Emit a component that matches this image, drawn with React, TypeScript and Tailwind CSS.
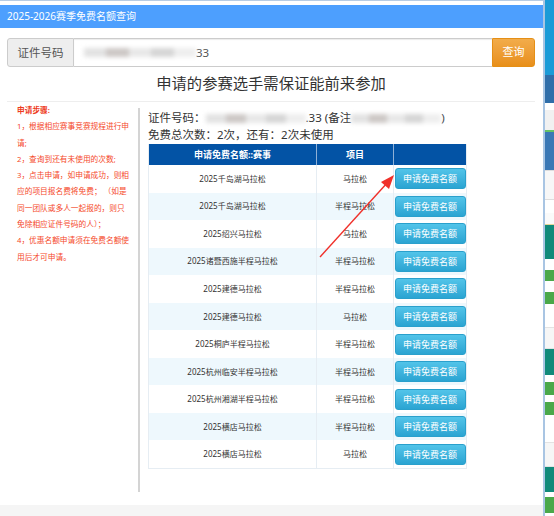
import React from "react";

const rows: [string, string][] = [
  ["2025千岛湖马拉松", "马拉松"],
  ["2025千岛湖马拉松", "半程马拉松"],
  ["2025绍兴马拉松", "马拉松"],
  ["2025诸暨西施半程马拉松", "半程马拉松"],
  ["2025建德马拉松", "半程马拉松"],
  ["2025建德马拉松", "马拉松"],
  ["2025桐庐半程马拉松", "半程马拉松"],
  ["2025杭州临安半程马拉松", "半程马拉松"],
  ["2025杭州湘湖半程马拉松", "半程马拉松"],
  ["2025横店马拉松", "半程马拉松"],
  ["2025横店马拉松", "马拉松"],
];

const stepLines = [
  { t: "申请步骤:", bold: true },
  { t: "1，根据相应赛事竞赛规程进行申" },
  { t: "请;" },
  { t: "2，查询到还有未使用的次数;" },
  { t: "3，点击申请，如申请成功，则相" },
  { t: "应的项目报名费将免费； （如是" },
  { t: "同一团队或多人一起报的，则只" },
  { t: "免除相应证件号码的人）；" },
  { t: "4，优惠名额申请须在免费名额使" },
  { t: "用后才可申请。" },
];

const strip = [
  "h-[75px] bg-[#1b9bd7]",
  "h-[28px] bg-[#2f6ea9]",
  "h-[7px] bg-white",
  "h-[20px] bg-[#f1f1f1]",
  "h-[2px] bg-[#66c266]",
  "h-[38px] bg-[#3a78b5]",
  "h-[30px] bg-[#f7f7f7] border-y border-[#dddddd]",
  "h-[13px] bg-white",
  "h-[12px] bg-[#fafafa] border-b border-[#e8d69a]",
  "h-[34px] bg-[#118a7a]",
  "h-[11px] bg-white",
  "h-[11px] bg-[#4aa84a]",
  "h-[11px] bg-white",
  "h-[12px] bg-[#4aa84a]",
  "h-[23px] bg-white",
  "h-[22px] bg-[#f6f6f6] border-y border-[#e3e3e3]",
  "h-[26px] bg-[#118a7a]",
  "h-[7px] bg-white",
  "h-[13px] bg-[#4aa84a]",
  "h-[7px] bg-white",
  "h-[13px] bg-[#4aa84a]",
  "h-[27px] bg-white",
  "h-[25px] bg-[#f6f6f6] border-y border-[#e3e3e3]",
  "h-[25px] bg-[#118a7a]",
  "h-[5px] bg-white",
  "h-[16px] bg-[#4aa84a]",
];

function Blur({ w }: { w: string }) {
  return (
    <span className={`inline-flex items-center h-[12px] align-middle blur-[2px] ${w}`}>
      <span className="h-[9px] flex-1 bg-[#e2e2e2]" />
      <span className="h-[9px] flex-1 bg-[#cdc8c6]" />
      <span className="h-[9px] flex-1 bg-[#e8e8e8]" />
      <span className="h-[9px] flex-1 bg-[#d6d6d6]" />
      <span className="h-[9px] flex-1 bg-[#eeeeee]" />
    </span>
  );
}

export default function App() {
  return (
    <div className="relative flex w-[554px] h-[516px] overflow-hidden bg-white font-['Noto_Sans','Noto_Sans_CJK_SC',sans-serif]">
      {/* modal */}
      <div className="flex flex-col w-[545px] h-full border-r-2 border-[#a9c5e3] border-t border-t-[#b7cce4] pt-[4px]">
        <div className="h-[23px] bg-[#4d9ffe] text-white text-[10px] px-[7px] flex items-center">
          2025-2026赛季免费名额查询
        </div>
        <div className="flex-1 flex flex-col pl-[7px] pr-[8px]">
          {/* search row */}
          <div className="mt-[10px] h-[29px] flex">
            <div className="w-[67px] bg-[#eeeeee] border border-[#cccccc] rounded-l-[3px] flex items-center justify-center text-[11.5px] text-[#555555]">
              证件号码
            </div>
            <div className="flex-1 border-y border-[#cccccc] bg-white flex items-center pl-[10px] text-[11.5px] text-[#555555] shadow-[inset_0_1px_1px_rgba(0,0,0,0.08)]">
              <Blur w="w-[112px]" />
              <span>33</span>
            </div>
            <div className="w-[43px] rounded-r-[3px] border border-[#e58f16] bg-linear-to-b from-[#f2ac4a] to-[#e88f18] text-white text-[11px] flex items-center justify-center">
              查询
            </div>
          </div>
          {/* heading */}
          <div className="h-[34px] flex items-center justify-center text-[15.3px] text-[#333333] pb-[2px]">
            申请的参赛选手需保证能前来参加
          </div>
          <div className="border-t border-[#eeeeee]" />
          {/* content */}
          <div className="flex">
            <div className="w-[133px] mt-[6px] h-[384px] border-r-2 border-[#d4d4d4] pl-[10px] text-[7.7px] text-[#f5482a] leading-[16.3px]">
              {stepLines.map((l, i) => (
                <div key={i} className={`whitespace-nowrap ${l.bold ? "font-bold text-[#ee3b1c]" : ""} ${i === 0 ? "mt-[-6px]" : ""}`}>
                  {l.t}
                </div>
              ))}
            </div>
            <div className="pl-[8px] pt-[7px] text-[11.5px] text-[#333333] leading-[17px]">
              <div className="whitespace-nowrap">
                证件号码：<Blur w="w-[100px]" />.33 (备注<Blur w="w-[90px]" />)
              </div>
              <div className="whitespace-nowrap">免费总次数：2次，还有：2次未使用</div>
              {/* table */}
              <div className="mt-[1px] w-[319px] border-x border-b border-[#e6edf3] leading-none">
                <div className="flex h-[21px] bg-[#0353a5] text-white text-[9px] font-bold">
                  <div className="w-[168px] border-r border-[#8fb0d6] flex items-center justify-center">申请免费名额::赛事</div>
                  <div className="w-[77px] border-r border-[#8fb0d6] flex items-center justify-center">项目</div>
                  <div className="flex-1" />
                </div>
                {rows.map(([a, b], i) => (
                  <div key={i} className={`flex h-[27.55px] text-[8px] text-[#333333] ${i % 2 === 1 ? "bg-[#eef8fd]" : "bg-white"}`}>
                    <div className="w-[168px] border-r border-[#e6edf3] flex items-center justify-center">{a}</div>
                    <div className="w-[77px] border-r border-[#e6edf3] flex items-center justify-center">{b}</div>
                    <div className="flex-1 flex items-center justify-center">
                      <div className="w-[71px] h-[21px] rounded-[3px] bg-linear-to-b from-[#52c4e9] to-[#2aa4d2] border border-[#2aa0cc] text-white text-[9px] flex items-center justify-center">
                        申请免费名额
                      </div>
                    </div>
                  </div>
                ))}
              </div>
            </div>
          </div>
          <div className="flex-1" />
        </div>
        <div className="h-[11px] bg-[#f5f5f5]" />
      </div>
      {/* background page strip */}
      <div className="flex-1 flex flex-col">
        {strip.map((c, i) => (
          <div key={i} className={`shrink-0 ${c}`} />
        ))}
      </div>
      {/* red annotation arrow */}
      <svg className="absolute left-0 top-0 pointer-events-none" width="554" height="516">
        <line x1="320" y1="257" x2="388" y2="182" stroke="#f0302a" strokeWidth="1.4" />
        <polygon points="394,175 381,182 389,189" fill="#f0302a" />
      </svg>
    </div>
  );
}
